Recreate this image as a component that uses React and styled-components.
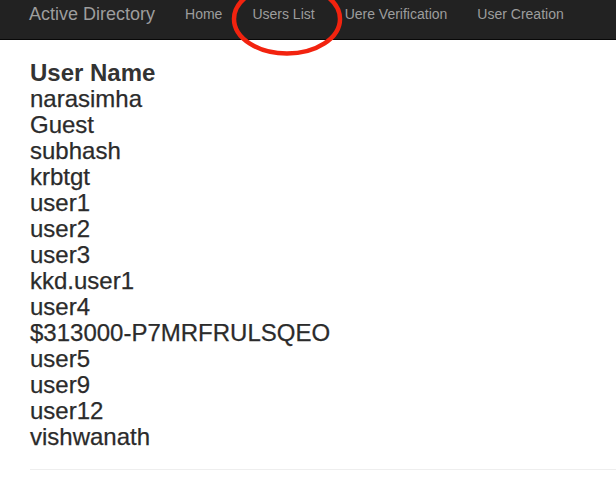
import React from "react";
import styled, { createGlobalStyle } from "styled-components";

const users = [
  "narasimha",
  "Guest",
  "subhash",
  "krbtgt",
  "user1",
  "user2",
  "user3",
  "kkd.user1",
  "user4",
  "$313000-P7MRFRULSQEO",
  "user5",
  "user9",
  "user12",
  "vishwanath"
];

const links = ["Home", "Users List", "Uere Verification", "User Creation"];

const App = () => {
  return (
    <Page>
      <GlobalStyle />
      <Navbar>
        <Brand>Active Directory</Brand>
        <NavList>
          {links.map(title => (
            <NavItem key={title}>{title}</NavItem>
          ))}
        </NavList>
      </Navbar>
      <Content>
        <UserTable>
          <thead>
            <tr>
              <HeadCell>User Name</HeadCell>
            </tr>
          </thead>
          <tbody>
            {users.map(name => (
              <tr key={name}>
                <Cell>{name}</Cell>
              </tr>
            ))}
          </tbody>
        </UserTable>
        <Rule />
      </Content>
      <Marker width="616" height="80" viewBox="0 0 616 80">
        <ellipse cx="287" cy="19" rx="53" ry="34.5" fill="none" stroke="#f2230f" strokeWidth="4.5" />
      </Marker>
    </Page>
  );
};

export default App;


const GlobalStyle = createGlobalStyle`
  html, body {
    margin: 0;
    padding: 0;
    background: #fff;
  }
  body {
    font-family: "Liberation Sans", Arial, Helvetica, sans-serif;
    color: #333;
  }
`;

const Page = styled.div`
  position: relative;
  width: 616px;
  height: 477px;
  overflow: hidden;
`;

const Navbar = styled.nav`
  display: flex;
  align-items: flex-start;
  height: 39px;
  padding-left: 14px;
  background-color: #222;
  border-bottom: 1px solid #080808;
`;

const Brand = styled.div`
  padding: 4px 15px 0;
  font-size: 18px;
  line-height: 20px;
  color: #9d9d9d;
  white-space: nowrap;
`;

const NavList = styled.ul`
  display: flex;
  margin: 0;
  padding: 0;
  list-style: none;
`;

const NavItem = styled.li`
  padding: 4px 15px 0;
  font-size: 14px;
  line-height: 20px;
  color: #9d9d9d;
  white-space: nowrap;
`;

const Content = styled.div`
  padding: 20px 0 0 30px;
`;

const UserTable = styled.table`
  border-collapse: collapse;
  border-spacing: 0;
`;

const HeadCell = styled.th`
  padding: 0;
  text-align: left;
  font-size: 24px;
  font-weight: bold;
  line-height: 26px;
  color: #333;
`;

const Cell = styled.td`
  padding: 0;
  font-size: 24px;
  line-height: 26px;
  color: #2b2b2b;
  -webkit-text-stroke: 0.25px #2b2b2b;
  white-space: nowrap;
`;

const Rule = styled.hr`
  margin: 19px 0 0;
  border: 0;
  border-top: 1px solid #eee;
`;

const Marker = styled.svg`
  position: absolute;
  top: 0;
  left: 0;
  pointer-events: none;
`;
